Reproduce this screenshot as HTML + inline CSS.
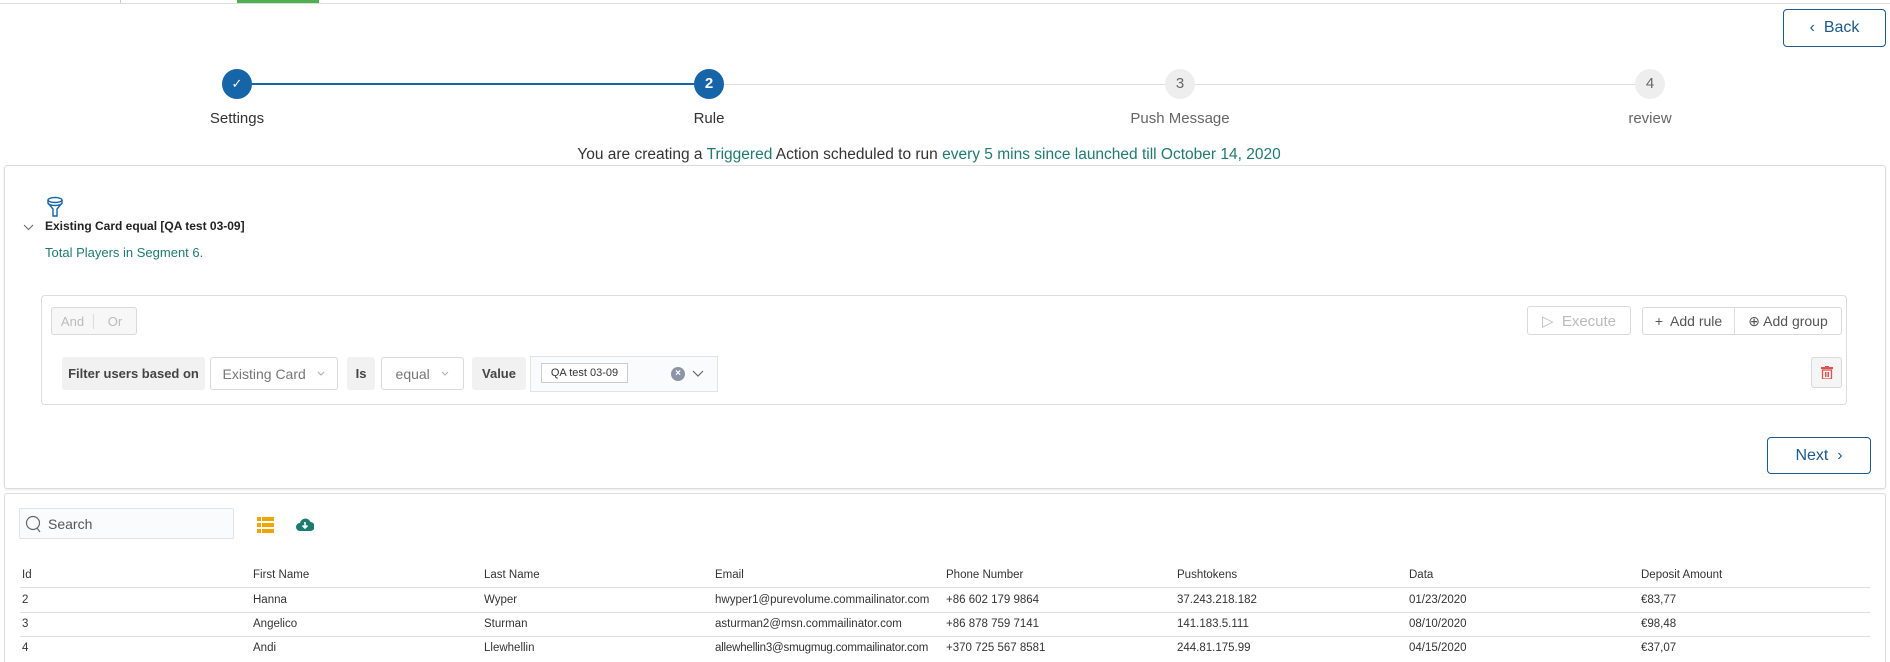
<!DOCTYPE html>
<html style="width:1890px;height:662px;overflow:hidden"><head><meta charset="utf-8"><style>
*{box-sizing:border-box;margin:0;padding:0}
body{width:1890px;height:662px;position:relative;overflow:hidden;background:#fff;font-family:"Liberation Sans",sans-serif;color:#333}
.a{position:absolute}
.c{position:absolute;border-radius:50%;width:30px;height:30px;text-align:center;line-height:30px;font-size:15px}
.lbl{position:absolute;font-size:15px;color:#444;transform:translateX(-50%);top:110px}
.teal{color:#1f7a70}
.btn{position:absolute;border:1px solid #d9d9d9;border-radius:3px;font-size:14px;color:#555;display:flex;align-items:center;justify-content:center}
.gl{position:absolute;background:#f1f1f1;border-radius:3px;font-size:13px;font-weight:bold;color:#444;display:flex;align-items:center;justify-content:center}
.th,.td{position:absolute;font-size:11.5px;color:#333}
.hl{position:absolute;left:20px;width:1850px;height:1px;background:#dcdfe6}
</style></head><body>
<div class="a" style="left:0;top:3px;width:1890px;height:1px;background:#ddd"></div>
<div class="a" style="left:237px;top:0;width:82px;height:3px;background:#4caf50"></div>
<div class="a" style="left:120px;top:0;width:1px;height:3px;background:#ccc"></div>

<div class="btn" style="left:1783px;top:9px;width:103px;height:38px;border-color:#1c5a8c;color:#1c5a8c;font-size:16px;border-radius:4px">&#8249;&nbsp;&nbsp;Back</div>

<div class="a" style="left:252px;top:83px;width:442px;height:2px;background:#1565a8"></div>
<div class="a" style="left:724px;top:84px;width:912px;height:1px;background:#ddd"></div>
<div class="c" style="left:222px;top:69px;background:#1565a8;color:#fff;font-size:13px">&#10003;</div>
<div class="c" style="left:694px;top:69px;background:#1565a8;color:#fff;font-weight:bold">2</div>
<div class="c" style="left:1165px;top:69px;background:#eee;color:#666">3</div>
<div class="c" style="left:1635px;top:69px;background:#eee;color:#666">4</div>
<div class="lbl" style="left:237px;color:#333">Settings</div>
<div class="lbl" style="left:709px;color:#333">Rule</div>
<div class="lbl" style="left:1180px;color:#666">Push Message</div>
<div class="lbl" style="left:1650px;color:#666">review</div>

<div class="a" style="left:0;width:1890px;top:146px;text-align:center;font-size:15.5px;color:#333;padding-right:32px">You are creating a <span class="teal">Triggered</span> Action scheduled to run <span class="teal">every 5 mins since launched till October 14, 2020</span></div>

<div class="a" style="left:4px;top:165px;width:1882px;height:324px;border:1px solid #dcdcdc;border-radius:3px;box-shadow:0 1px 2px rgba(0,0,0,.08)"></div>
<svg class="a" style="left:45px;top:196px" width="20" height="22" viewBox="0 0 20 22" fill="none" stroke="#1565a8" stroke-width="1.4"><ellipse cx="10" cy="4" rx="7" ry="2.5"/><path d="M3 4v3c0 1.5 3 2.5 7 2.5s7-1 7-2.5V4M3 7l5 6v7h4v-7l5-6"/></svg>
<svg class="a" style="left:23px;top:224px" width="11" height="7" viewBox="0 0 11 7"><path d="M1 1l4.5 4.5L10 1" fill="none" stroke="#666" stroke-width="1"/></svg>
<div class="a" style="left:45px;top:219px;font-size:12px;font-weight:bold;color:#222">Existing Card equal [QA test 03-09]</div>
<div class="a teal" style="left:45px;top:245px;font-size:13px">Total Players in Segment 6.</div>

<div class="a" style="left:41px;top:295px;width:1806px;height:110px;border:1px solid #ddd;border-radius:4px"></div>
<div class="btn" style="left:51px;top:307px;width:86px;height:28px;background:#f7f7f7;color:#bbb;font-size:13px"><span style="width:50%;text-align:center;border-right:1px solid #ddd">And</span><span style="width:50%;text-align:center">Or</span></div>
<div class="btn" style="left:1527px;top:306px;width:104px;height:29px;color:#bbb;font-size:15px">&#9655;&nbsp; Execute</div>
<div class="btn" style="left:1642px;top:307px;width:200px;height:28px;font-size:14px"><span style="width:93px;text-align:center;border-right:1px solid #ddd;line-height:26px">+&nbsp; Add rule</span><span style="width:107px;text-align:center">&#8853; Add group</span></div>
<div class="btn" style="left:1811px;top:357px;width:31px;height:31px;background:#f5f5f5"><svg width="12" height="13" viewBox="0 0 12 13"><rect x="0" y="1" width="12" height="2" fill="#e05050"/><rect x="4" y="0" width="4" height="2" fill="#e05050"/><rect x="1.5" y="4" width="9" height="9" fill="none" stroke="#e05050" stroke-width="1.3"/><path d="M4.5 6v5M6 6v5M7.5 6v5" stroke="#e05050"/></svg></div>

<div class="gl" style="left:62px;top:357px;width:143px;height:33px">Filter users based on</div>
<div class="btn" style="left:210px;top:357px;width:128px;height:33px;color:#777;font-size:14px">Existing Card&nbsp;&nbsp;&nbsp;<svg width="8" height="5" viewBox="0 0 8 5"><path d="M1 1l3 3 3-3" fill="none" stroke="#aaa"/></svg></div>
<div class="gl" style="left:347px;top:357px;width:28px;height:33px">Is</div>
<div class="btn" style="left:381px;top:357px;width:83px;height:33px;color:#777;font-size:14px">equal&nbsp;&nbsp;&nbsp;<svg width="8" height="5" viewBox="0 0 8 5"><path d="M1 1l3 3 3-3" fill="none" stroke="#aaa"/></svg></div>
<div class="gl" style="left:472px;top:357px;width:54px;height:33px">Value</div>
<div class="a" style="left:530px;top:356px;width:188px;height:36px;border:1px solid #e3e3e3;background:#fafbfc"></div>
<div class="a" style="left:541px;top:363px;width:87px;height:20px;border:1px solid #ccc;background:#fff;font-size:11px;text-align:center;line-height:18px;color:#333">QA test 03-09</div>
<div class="a" style="left:671px;top:367px;width:14px;height:14px;border-radius:50%;background:#8c95a5;color:#fff;font-size:10px;text-align:center;line-height:14px;font-weight:bold">&#215;</div>
<svg class="a" style="left:692px;top:370px" width="12" height="8" viewBox="0 0 12 8"><path d="M1 1l5 5 5-5" fill="none" stroke="#666" stroke-width="1.2"/></svg>

<div class="btn" style="left:1767px;top:437px;width:104px;height:37px;border-color:#1c5a8c;color:#1c5a8c;font-size:16px;border-radius:4px">Next&nbsp;&nbsp;&#8250;</div>

<div class="a" style="left:4px;top:493px;width:1882px;height:169px;border:1px solid #dcdcdc;border-bottom:none;border-radius:3px 3px 0 0"></div>
<div class="a" style="left:19px;top:508px;width:215px;height:31px;border:1px solid #e3e3e3;background:#fafbfc;border-radius:2px"></div>
<svg class="a" style="left:25px;top:515px" width="16" height="18" viewBox="0 0 16 18"><circle cx="8" cy="8" r="6.5" fill="none" stroke="#666" stroke-width="1.2"/><path d="M12 13l3 4" stroke="#666" stroke-width="1.2"/></svg>
<div class="a" style="left:48px;top:516px;font-size:14px;color:#555">Search</div>
<svg class="a" style="left:257px;top:517px" width="17" height="16" viewBox="0 0 17 16"><g fill="#f0a500"><rect x="0" y="0" width="4" height="4"/><rect x="5" y="0" width="12" height="4"/><rect x="0" y="6" width="4" height="4"/><rect x="5" y="6" width="12" height="4"/><rect x="0" y="12" width="4" height="4"/><rect x="5" y="12" width="12" height="4"/></g></svg>
<svg class="a" style="left:296px;top:517px" width="18" height="15" viewBox="0 0 18 15"><path d="M4 14a4 4 0 0 1 0-8 5.5 5.5 0 0 1 10.5-1A4.5 4.5 0 0 1 14 14z" fill="#1f7a70"/><path d="M9 5v6M6.5 8.5L9 11l2.5-2.5" stroke="#fff" stroke-width="1.6" fill="none"/></svg>

<div class="th" style="left:22px;top:569px">Id</div>
<div class="th" style="left:253px;top:569px">First Name</div>
<div class="th" style="left:484px;top:569px">Last Name</div>
<div class="th" style="left:715px;top:569px">Email</div>
<div class="th" style="left:946px;top:569px">Phone Number</div>
<div class="th" style="left:1177px;top:569px">Pushtokens</div>
<div class="th" style="left:1409px;top:569px">Data</div>
<div class="th" style="left:1641px;top:569px">Deposit Amount</div>
<div class="hl" style="top:587px"></div>

<div class="td" style="left:22px;top:594px">2</div>
<div class="td" style="left:253px;top:594px">Hanna</div>
<div class="td" style="left:484px;top:594px">Wyper</div>
<div class="td" style="left:715px;top:594px">hwyper1@purevolume.commailinator.com</div>
<div class="td" style="left:946px;top:594px">+86 602 179 9864</div>
<div class="td" style="left:1177px;top:594px">37.243.218.182</div>
<div class="td" style="left:1409px;top:594px">01/23/2020</div>
<div class="td" style="left:1641px;top:594px">€83,77</div>
<div class="hl" style="top:612px"></div>

<div class="td" style="left:22px;top:618px">3</div>
<div class="td" style="left:253px;top:618px">Angelico</div>
<div class="td" style="left:484px;top:618px">Sturman</div>
<div class="td" style="left:715px;top:618px">asturman2@msn.commailinator.com</div>
<div class="td" style="left:946px;top:618px">+86 878 759 7141</div>
<div class="td" style="left:1177px;top:618px">141.183.5.111</div>
<div class="td" style="left:1409px;top:618px">08/10/2020</div>
<div class="td" style="left:1641px;top:618px">€98,48</div>
<div class="hl" style="top:636px"></div>

<div class="td" style="left:22px;top:642px">4</div>
<div class="td" style="left:253px;top:642px">Andi</div>
<div class="td" style="left:484px;top:642px">Llewhellin</div>
<div class="td" style="left:715px;top:642px;letter-spacing:-0.2px">allewhellin3@smugmug.commailinator.com</div>
<div class="td" style="left:946px;top:642px">+370 725 567 8581</div>
<div class="td" style="left:1177px;top:642px">244.81.175.99</div>
<div class="td" style="left:1409px;top:642px">04/15/2020</div>
<div class="td" style="left:1641px;top:642px">€37,07</div>
</body></html>
